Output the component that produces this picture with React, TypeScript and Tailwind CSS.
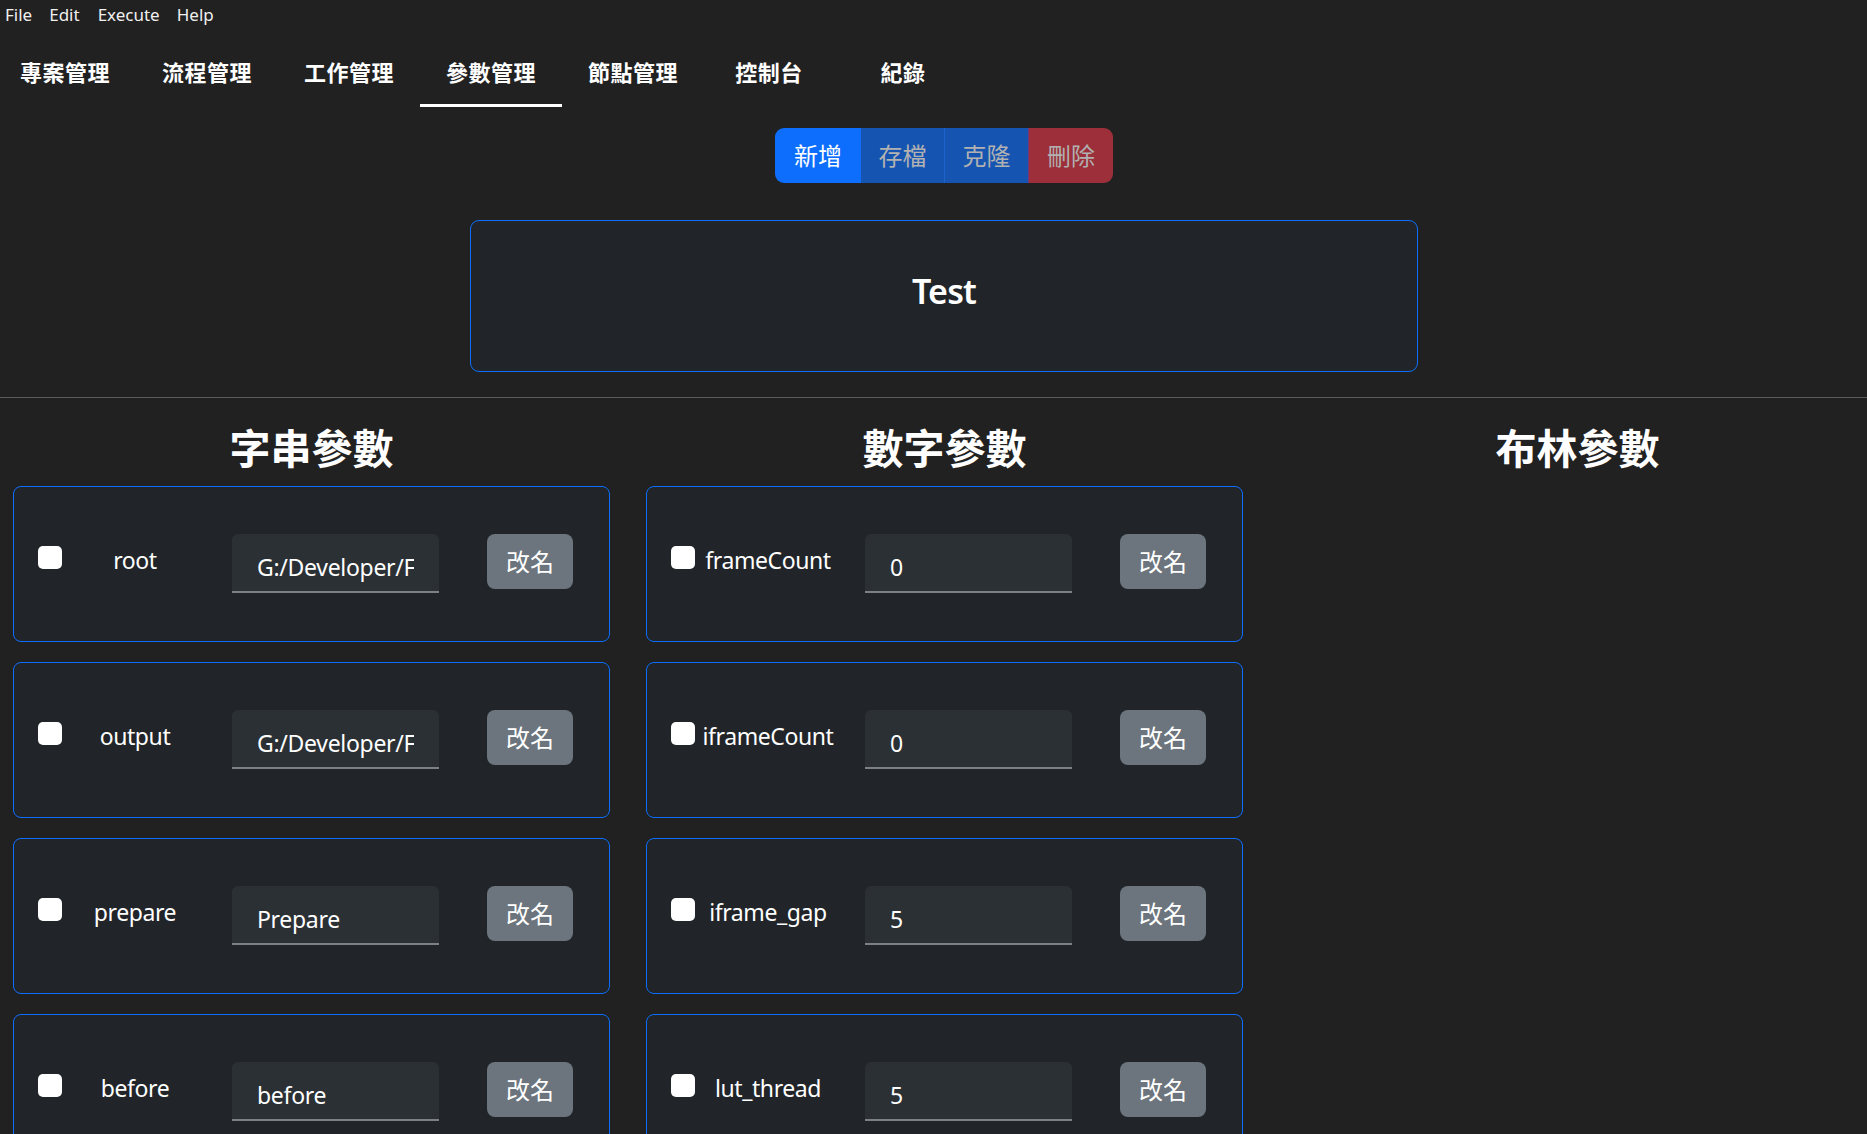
import React from "react";

type Tab = { label: string; w: string; active?: boolean };

const tabs: Tab[] = [
  { label: "專案管理", w: "w-[142px]" },
  { label: "流程管理", w: "w-[142px]" },
  { label: "工作管理", w: "w-[142px]" },
  { label: "參數管理", w: "w-[142px]", active: true },
  { label: "節點管理", w: "w-[142px]" },
  { label: "控制台", w: "w-[130px]" },
  { label: "紀錄", w: "w-[138px]" },
];

type Param = { name: string; value: string };

const stringParams: Param[] = [
  { name: "root", value: "G:/Developer/FrameProcess/root" },
  { name: "output", value: "G:/Developer/FrameProcess/output" },
  { name: "prepare", value: "Prepare" },
  { name: "before", value: "before" },
];

const numberParams: Param[] = [
  { name: "frameCount", value: "0" },
  { name: "iframeCount", value: "0" },
  { name: "iframe_gap", value: "5" },
  { name: "lut_thread", value: "5" },
];

function ParamCard({ p }: { p: Param }) {
  return (
    <div className="mx-auto h-[156px] w-[597px] shrink-0 rounded-[8px] border border-[#0d6efd] bg-[#212529]">
      <div className="flex items-start pt-[47px]">
        <div className="ml-[24px] mt-[12px] h-[23px] w-[24px] shrink-0 rounded-[5px] bg-white" />
        <div className="mt-[8px] w-[146px] shrink-0 whitespace-nowrap text-center text-[23px] leading-[36px] tracking-[-0.4px] text-white">
          {p.name}
        </div>
        <input
          readOnly
          value={p.value}
          className="ml-[24px] h-[59px] w-[207px] shrink-0 rounded-t-[6px] border-b-2 border-[#7d8085] bg-[#2b3035] px-[25px] pb-0 pt-[8px] text-[23px] tracking-[-0.3px] text-white outline-none"
        />
        <button className="ml-[48px] h-[55px] w-[86px] shrink-0 rounded-[8px] bg-[#6c757d] text-[24px] text-white">
          改名
        </button>
      </div>
    </div>
  );
}

function Column({ title, items }: { title: string; items: Param[] }) {
  return (
    <div className="flex w-[633px] flex-col">
      <div className="pb-[13px] pt-[26px] text-center text-[41px] font-semibold leading-[49px] text-white">
        {title}
      </div>
      <div className="flex flex-col gap-[20px]">
        {items.map((p) => (
          <ParamCard key={p.name} p={p} />
        ))}
      </div>
    </div>
  );
}

export default function App() {
  return (
    <div className="h-screen w-full overflow-hidden bg-[#212121] font-[family-name:'Noto_Sans','Noto_Sans_CJK_TC',sans-serif] text-white">
      <div className="w-[1888px]">
        {/* Menu bar */}
        <div className="flex h-[30px] items-center pl-[5px] text-[17px] text-[#f0f0f0]">
          <span>File</span>
          <span className="ml-[17px]">Edit</span>
          <span className="ml-[18px]">Execute</span>
          <span className="ml-[17px]">Help</span>
        </div>

        {/* Tabs */}
        <div className="ml-[-6px] flex">
          {tabs.map((t) => (
            <div
              key={t.label}
              className={`${t.w} flex h-[77px] items-center justify-center border-b-[3px] pt-[10px] text-[22px] font-bold tracking-[0.5px] text-white ${
                t.active ? "border-white" : "border-transparent"
              }`}
            >
              {t.label}
            </div>
          ))}
        </div>

        {/* Button group */}
        <div className="mt-[21px] flex justify-center">
          <div className="flex h-[55px] overflow-hidden rounded-[9px] text-[24px]">
            <button className="flex w-[86px] items-center justify-center bg-[#0d6efd] text-white">新增</button>
            <button className="flex w-[83px] items-center justify-center bg-[#1554b1] text-[#b1b1b1]">存檔</button>
            <button className="flex w-[84px] items-center justify-center border-l border-[#1d63cc] bg-[#1554b1] text-[#b1b1b1]">克隆</button>
            <button className="flex w-[85px] items-center justify-center border-l border-[#6e3a84] bg-[#9c2f39] text-[#b1b1b1]">刪除</button>
          </div>
        </div>

        {/* Title card */}
        <div className="mx-auto mt-[37px] flex h-[152px] w-[948px] items-center justify-center rounded-[9px] border border-[#0d6efd] bg-[#212529] pb-[9px] text-[34px] font-semibold tracking-[-0.8px] text-white">
          Test
        </div>

        {/* Divider */}
        <div className="mt-[25px] h-px w-full bg-[#5a5a5a]" />

        {/* Columns */}
        <div className="ml-[-5px] grid grid-cols-[633px_633px_633px]">
          <Column title="字串參數" items={stringParams} />
          <Column title="數字參數" items={numberParams} />
          <Column title="布林參數" items={[]} />
        </div>
      </div>
    </div>
  );
}
